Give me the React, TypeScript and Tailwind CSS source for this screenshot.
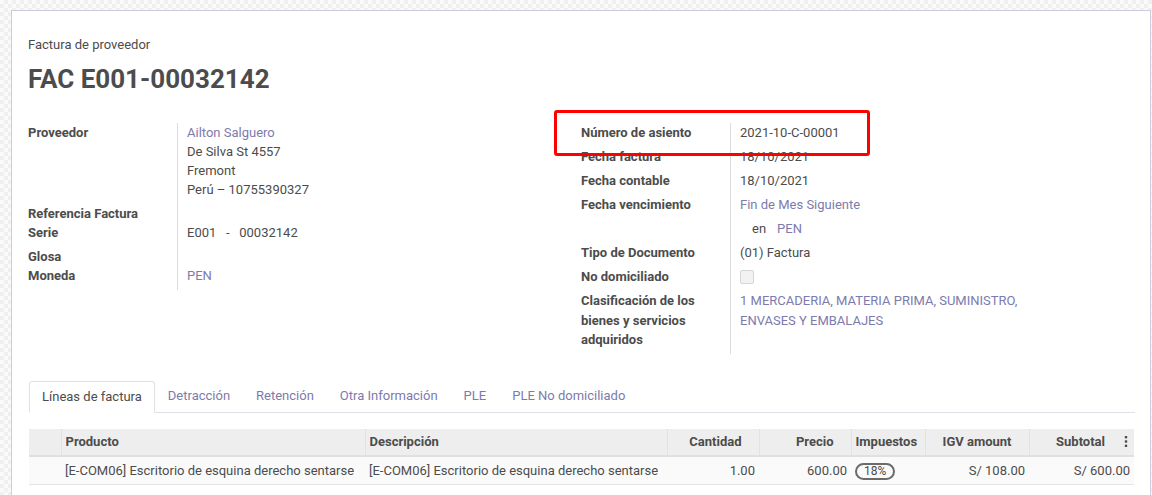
import React from "react";

const LINK = "text-[#7c7bad]";

function Row({
  label,
  children,
  pb = true,
  wide = false,
}: {
  label?: React.ReactNode;
  children?: React.ReactNode;
  pb?: boolean;
  wide?: boolean;
}) {
  const pad = pb ? "pb-[5px]" : "";
  return (
    <div className="flex leading-[19px]">
      <div className={`w-[150px] shrink-0 border-r border-[#dcdcdc] pr-2 font-bold ${pad}`}>{label}</div>
      <div className={`pl-[9px] ${pad} ${wide ? "w-[320px]" : ""}`}>{children}</div>
    </div>
  );
}

export default function App() {
  const th = "h-[27px] border-r border-[#e2e2e2] px-[4px] font-bold";
  return (
    <div
      className="relative min-h-[495px] w-[1152px] overflow-hidden bg-[repeating-conic-gradient(#f0f0f0_0%_25%,#fafafa_0%_50%)] bg-[length:8px_8px] pl-[11px] pt-[10px] text-[13px] text-[#4c4c4c]"
      style={{ fontFamily: "Roboto, 'Noto Sans', sans-serif" }}
    >
      <div className="h-[500px] w-[1140px] border border-[#cfcbdd] bg-white pl-[17px] pr-[15px] pt-[26px]">
        <div className="-ml-px leading-[16px]">Factura de proveedor</div>
        <h1 className="-ml-px mt-[10px] text-[26px] font-bold leading-[32px] text-[#4c4c4c]">FAC E001-00032142</h1>

        <div className="-ml-px mt-[28px] flex">
          <div className="w-[553px] shrink-0">
            <Row label="Proveedor">
              <div className={LINK}>Ailton Salguero</div>
              <div>De Silva St 4557</div>
              <div>Fremont</div>
              <div>Perú – 10755390327</div>
            </Row>
            <Row label="Referencia Factura" pb={false} />
            <Row label="Serie">
              <span className="whitespace-pre">E001   -   00032142</span>
            </Row>
            <Row label="Glosa" pb={false} />
            <Row label="Moneda">
              <span className={LINK}>PEN</span>
            </Row>
          </div>

          <div className="relative">
            <Row label="Número de asiento">2021-10-C-00001</Row>
            <Row label="Fecha factura">18/10/2021</Row>
            <Row label="Fecha contable">18/10/2021</Row>
            <Row label="Fecha vencimiento">
              <span className={LINK}>Fin de Mes Siguiente</span>
            </Row>
            <Row>
              <span className="pl-[12px]">en</span>
              <span className={`ml-[11px] ${LINK}`}>PEN</span>
            </Row>
            <Row label="Tipo de Documento">(01) Factura</Row>
            <Row label="No domiciliado">
              <div className="mt-[3px] h-[14px] w-[14px] rounded-[2px] border border-[#d6d6d6] bg-[#f2f2f2]" />
            </Row>
            <div className="flex leading-[19.5px]">
              <div className="w-[150px] shrink-0 border-r border-[#dcdcdc] pb-[4px] pr-2 font-bold">
                Clasificación de los bienes y servicios adquiridos
              </div>
              <div className={`w-[320px] pl-[9px] ${LINK}`}>1 MERCADERIA, MATERIA PRIMA, SUMINISTRO, ENVASES Y EMBALAJES</div>
            </div>

            <div className="absolute left-[-27px] top-[-13px] h-[46px] w-[316px] rounded-[3px] border-[3px] border-[#ff0000]" />
          </div>
        </div>

        <div className="mt-[26px] flex h-[33px] items-end border-b border-[#dee2e6]">
          <div className="-mb-px flex h-[32px] items-center rounded-t-[3px] border border-b-white border-[#dee2e6] bg-white px-[12px]">
            Líneas de factura
          </div>
          {["Detracción", "Retención", "Otra Información", "PLE", "PLE No domiciliado"].map((t) => (
            <div key={t} className={`flex h-[32px] items-center px-[13px] ${LINK}`}>
              {t}
            </div>
          ))}
        </div>

        <table className="mt-[16px] w-[1105px] table-fixed border-collapse">
          <colgroup>
            <col className="w-[32px]" />
            <col className="w-[304px]" />
            <col className="w-[302px]" />
            <col className="w-[92px]" />
            <col className="w-[92px]" />
            <col className="w-[74px]" />
            <col className="w-[104px]" />
            <col className="w-[105px]" />
          </colgroup>
          <thead>
            <tr className="border-b-2 border-[#e0e0e0] bg-[#eeeeee] text-left">
              <th className={th} />
              <th className={th}>Producto</th>
              <th className={th}>Descripción</th>
              <th className={`${th} pr-[17px] text-right`}>Cantidad</th>
              <th className={`${th} pr-[17px] text-right`}>Precio</th>
              <th className={th}>Impuestos</th>
              <th className={`${th} pr-[17px] text-right`}>IGV amount</th>
              <th className="h-[27px] px-[4px] text-right font-bold">
                <span className="inline-flex items-center">
                  Subtotal
                  <svg viewBox="0 0 4 14" className="ml-[19px] mr-[2px] h-[11px] w-[4px]" fill="#4c4c4c">
                    <rect x="0.5" y="0" width="3" height="3" />
                    <rect x="0.5" y="5.5" width="3" height="3" />
                    <rect x="0.5" y="11" width="3" height="3" />
                  </svg>
                </span>
              </th>
            </tr>
          </thead>
          <tbody>
            <tr className="h-[29px] border-b border-[#e4e4e4] bg-[#fafafa]">
              <td />
              <td className="truncate whitespace-nowrap px-[4px]">[E-COM06] Escritorio de esquina derecho sentarse</td>
              <td className="overflow-hidden whitespace-nowrap px-[4px]">[E-COM06] Escritorio de esquina derecho sentarse</td>
              <td className="px-[4px] text-right">1.00</td>
              <td className="px-[4px] text-right">600.00</td>
              <td className="px-[4px]">
                <span className="inline-block rounded-full border-2 border-[#6b6b6b] px-[7px] text-[12px] leading-[13px]">18%</span>
              </td>
              <td className="px-[4px] text-right">S/ 108.00</td>
              <td className="px-[4px] text-right">S/ 600.00</td>
            </tr>
          </tbody>
        </table>
      </div>
    </div>
  );
}
